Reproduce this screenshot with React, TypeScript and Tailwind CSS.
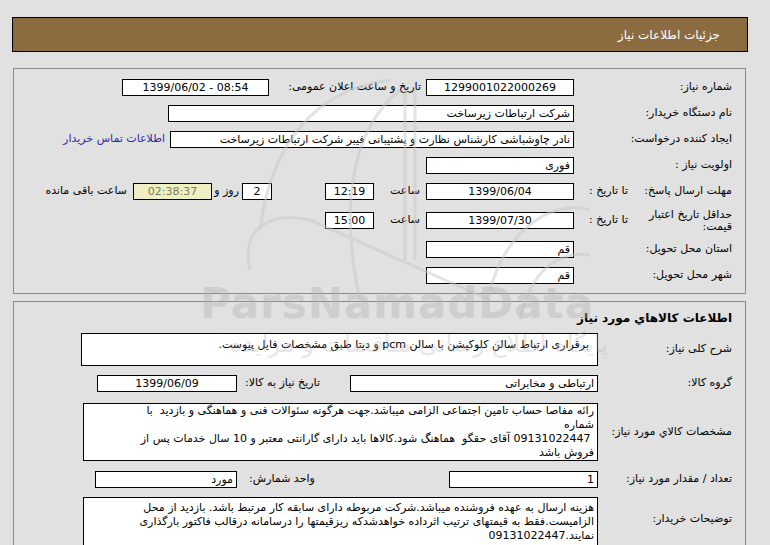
import React from 'react'

const font = { fontFamily: '"DejaVu Sans", "Noto Sans", sans-serif' }

function Box({ w, h = 'h-[17px]', center, children, className = '' }: { w: string; h?: string; center?: boolean; children?: React.ReactNode; className?: string }) {
  return (
    <div
      className={`${w} ${h} shrink-0 border border-black bg-white px-[3px] leading-[15px] whitespace-nowrap overflow-hidden ${center ? 'text-center' : 'text-right'} ${className}`}
    >
      {children}
    </div>
  )
}

function Watermark() {
  return (
    <div className="pointer-events-none absolute inset-0 overflow-hidden">
      <svg className="absolute left-[190px] top-[70px]" width="400" height="250" viewBox="0 0 400 250" fill="none" stroke="#c8c8c8" strokeWidth="3" opacity="0.5">
        <path d="M200 10 C120 20 80 80 70 160" />
        <path d="M210 20 C160 60 150 140 170 230" />
        <path d="M215 20 L215 190" />
        <path d="M225 20 L225 190" />
        <path d="M60 200 C50 160 80 140 120 150 L300 230" />
        <path d="M300 220 C320 150 370 130 400 140" />
        <path d="M330 250 C340 200 370 180 400 185" />
      </svg>
      <div className="absolute left-[200px] top-[272px] text-[42px] font-bold tracking-[1px] text-[#b4b4b4] opacity-40" style={{ fontFamily: '"DejaVu Sans", sans-serif' }}>
        ParsNamadData
      </div>
      <div dir="rtl" className="absolute left-[230px] top-[326px] text-[24px] text-[#b8b8b8] opacity-35">
        پایگاه اطلاع رسانی مناقصات و مزایده
      </div>
    </div>
  )
}

export default function App() {
  return (
    <div className="relative min-h-[545px] w-[770px] overflow-hidden bg-[#e1e1e1] pl-[12px] pr-[22px] pt-[17px] text-[11px] text-black" style={font}>
      {/* header */}
      <div dir="rtl" className="flex h-[35px] items-center border border-black bg-[#8b6c41] pr-[27px] text-[12px] text-white">
        جزئیات اطلاعات نیاز
      </div>

      {/* panel 1 */}
      <div dir="rtl" className="ml-[1px] mr-[2px] mt-[16px] flex flex-col gap-[9px] border border-[#8a8a8a] pb-[9px] pr-[13px] pt-[10px]">
        <div className="flex h-[17px] items-center">
          <div className="w-[158px] shrink-0">شماره نیاز:</div>
          <Box w="w-[148px]" center>1299001022000269</Box>
          <div className="w-[157px] shrink-0 pr-[5px]">تاریخ و ساعت اعلان عمومی:</div>
          <div dir="ltr">
            <Box w="w-[147px]" center>1399/06/02 - 08:54</Box>
          </div>
        </div>
        <div className="flex h-[17px] items-center">
          <div className="w-[158px] shrink-0">نام دستگاه خریدار:</div>
          <Box w="w-[406px]">شرکت ارتباطات زیرساخت</Box>
        </div>
        <div className="flex h-[17px] items-center">
          <div className="w-[158px] shrink-0">ایجاد کننده درخواست:</div>
          <Box w="w-[404px]">نادر چاوشباشی کارشناس نظارت و پشتیبانی فیبر شرکت ارتباطات زیرساخت</Box>
          <div className="pr-[5px] text-[#2b2ba8]">اطلاعات تماس خریدار</div>
        </div>
        <div className="flex h-[17px] items-center">
          <div className="w-[158px] shrink-0">اولویت نیاز :</div>
          <Box w="w-[148px]">فوری</Box>
        </div>
        <div className="flex h-[17px] items-center">
          <div className="flex w-[158px] shrink-0 justify-between pl-[15px]">
            <span>مهلت ارسال پاسخ:</span>
            <span>تا تاریخ :</span>
          </div>
          <Box w="w-[148px]" center>1399/06/04</Box>
          <div className="w-[52px] shrink-0 pr-[6px]">ساعت</div>
          <Box w="w-[49px]" center>12:19</Box>
          <div className="w-[53px] shrink-0" />
          <Box w="w-[30px]" center>2</Box>
          <div className="w-[30px] shrink-0 pr-[3px]">روز و</div>
          <Box w="w-[79px]" center className="!bg-[#efefc4] text-[#7d7d5a]">02:38:37</Box>
          <div className="pr-[6px]">ساعت باقی مانده</div>
        </div>
        <div className="flex h-[23px] items-center">
          <div className="flex w-[158px] shrink-0 items-center justify-between pl-[15px]">
            <span className="leading-[12px]">حداقل تاریخ اعتبار<br />قیمت:</span>
            <span>تا تاریخ :</span>
          </div>
          <Box w="w-[148px]" center>1399/07/30</Box>
          <div className="w-[52px] shrink-0 pr-[6px]">ساعت</div>
          <Box w="w-[49px]" center>15:00</Box>
        </div>
        <div className="flex h-[17px] items-center">
          <div className="w-[158px] shrink-0">استان محل تحویل:</div>
          <Box w="w-[148px]">قم</Box>
        </div>
        <div className="flex h-[17px] items-center">
          <div className="w-[158px] shrink-0">شهر محل تحویل:</div>
          <Box w="w-[148px]">قم</Box>
        </div>
      </div>

      {/* panel 2 */}
      <div dir="rtl" className="ml-[1px] mr-[2px] mt-[7px] flex h-[260px] flex-col border border-[#8a8a8a] pr-[13px] pt-[9px]">
        <div className="h-[22px] text-[12px] font-bold leading-[14px]">اطلاعات کالاهاي مورد نیاز</div>
        <div className="flex items-center">
          <div className="w-[134px] shrink-0">شرح کلی نیاز:</div>
          <Box w="w-[517px]" h="h-[33px]" className="pr-[8px] pt-[3px]">
            برقراری ارتباط سالن کلوکیشن با سالن pcm و دیتا طبق مشخصات فایل پیوست.
          </Box>
        </div>
        <div className="mt-[9px] flex h-[17px] items-center">
          <div className="w-[134px] shrink-0">گروه کالا:</div>
          <Box w="w-[248px]">ارتباطی و مخابراتی</Box>
          <div className="w-[113px] shrink-0 pl-[8px] text-left">تاریخ نیاز به کالا:</div>
          <Box w="w-[140px]" center>1399/06/09</Box>
        </div>
        <div className="mt-[11px] flex items-center">
          <div className="w-[134px] shrink-0">مشخصات کالاي مورد نیاز:</div>
          <div className="h-[58px] w-[515px] shrink-0 border border-black bg-white px-[3px] leading-[14px]">
            رائه مفاصا حساب تامین اجتماعی الزامی میباشد.جهت هرگونه سئوالات فنی و هماهنگی و بازدید&nbsp; با
            <br />
            شماره
            <br />
            &nbsp;09131022447 آقای حقگو&nbsp; هماهنگ شود.کالاها باید دارای گارانتی معتبر و 10 سال خدمات پس از
            <br />
            فروش باشد
          </div>
        </div>
        <div className="mt-[10px] flex h-[17px] items-center">
          <div className="w-[134px] shrink-0">تعداد / مقدار مورد نیاز:</div>
          <Box w="w-[149px]">1</Box>
          <div className="w-[212px] shrink-0 pl-[12px] text-left">واحد شمارش:</div>
          <Box w="w-[142px]">مورد</Box>
        </div>
        <div className="mt-[9px] flex items-start">
          <div className="w-[134px] shrink-0 pt-[14px]">توضیحات خریدار:</div>
          <div className="h-[60px] w-[515px] shrink-0 border border-black bg-white px-[3px] pt-[3px] leading-[14px]">
            هزینه ارسال به عهده فروشنده میباشد.شرکت مربوطه دارای سابقه کار مرتبط باشد. بازدید از محل
            <br />
            الزامیست.فقط به قیمتهای ترتیب اثرداده خواهدشدکه ریزقیمتها را درسامانه درقالب فاکتور بارگذاری
            <br />
            نمایند.09131022447
          </div>
        </div>
      </div>

      <Watermark />
    </div>
  )
}
